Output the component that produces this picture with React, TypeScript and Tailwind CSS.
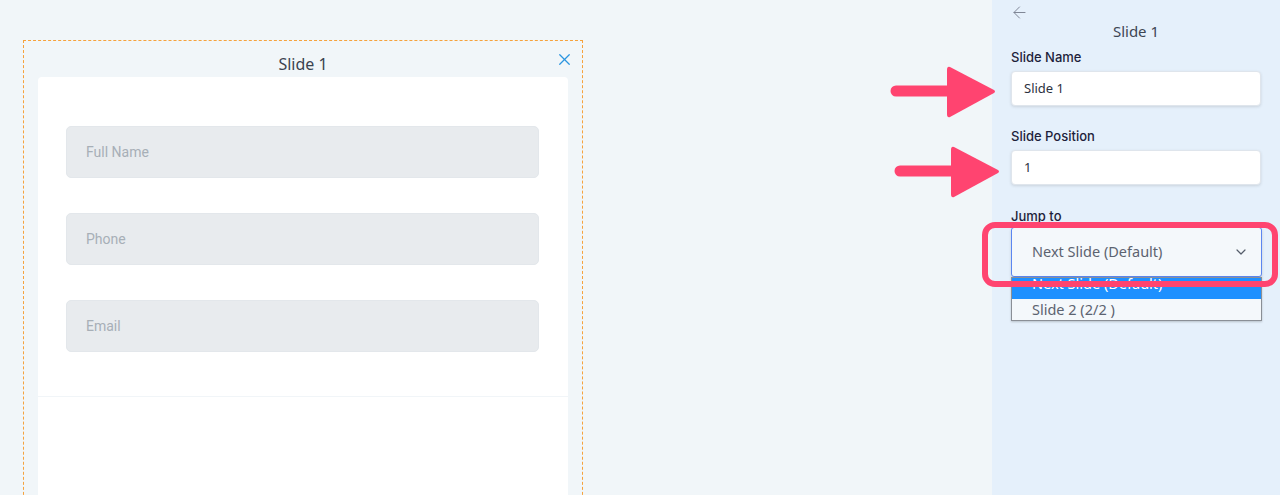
import { X, ArrowLeft, ChevronDown } from 'lucide-react'

function PinkArrow({ className }: { className: string }) {
  return (
    <svg className={`absolute ${className}`} width="110" height="56" viewBox="0 0 110 56" fill="none">
      <path d="M6 27 L62 27" stroke="#ff4470" strokeWidth="11" strokeLinecap="round" />
      <path d="M60 3 L104 26 Q106 27.5 104 29 L60 53 Q57 54 57 50 L57 6 Q57 2 60 3 Z" fill="#ff4470" />
    </svg>
  )
}

const fields = ['Full Name', 'Phone', 'Email']

export default function App() {
  return (
    <div className="relative flex h-[495px] w-[1280px] overflow-hidden bg-[#f1f6f9] font-['Noto_Sans',sans-serif]">
      {/* canvas */}
      <div className="w-[992px] shrink-0 pl-[23px] pt-[40px]">
        <div className="h-[480px] w-[560px] border border-dashed border-[#f6a23c] px-[14px]">
          <div className="relative flex h-[36px] items-end justify-center pb-[3px]">
            <span className="text-[16px] leading-[20px] text-[#3a4350]">Slide 1</span>
            <X className="absolute right-[-6px] top-[9px] text-[#2b95e0]" size={19} strokeWidth={1.6} />
          </div>
          <div className="h-[440px] w-[530px] rounded-t-[4px] bg-white">
            <div className="flex flex-col gap-[35px] px-[28px] pt-[49px] pb-[44px]">
              {fields.map((f) => (
                <div
                  key={f}
                  className="flex h-[52px] w-[473px] items-center rounded-[5px] border border-[#e3e7eb] bg-[#e8ebee] pl-[19px] font-['Roboto',sans-serif] text-[14px] text-[#a7afb7]"
                >
                  {f}
                </div>
              ))}
            </div>
            <div className="h-px bg-[#f1f5f8]" />
          </div>
        </div>
      </div>

      {/* sidebar */}
      <div className="w-[288px] shrink-0 bg-[#e5f0fb] px-[19px]">
        <div className="pt-[3px]">
          <ArrowLeft className="-ml-[1px] block text-[#7a8190]" size={19} strokeWidth={1.2} />
        </div>
        <div className="-mt-[1px] text-center text-[15px] leading-[20px] text-[#3d4654]">Slide 1</div>
        <div className="mt-[8px] font-['Inter',sans-serif] text-[13px] font-medium leading-[16px] text-[#1e1f3b]">Slide Name</div>
        <div className="mt-[6px] flex h-[35px] w-[250px] items-center rounded-[4px] border border-[#dfe5ec] bg-white pl-[12px] text-[13px] text-[#2c3140] shadow-[0_1px_3px_rgba(0,0,0,0.12)]">
          Slide 1
        </div>
        <div className="mt-[22px] font-['Inter',sans-serif] text-[13px] font-medium leading-[16px] text-[#1e1f3b]">Slide Position</div>
        <div className="mt-[6px] flex h-[35px] w-[250px] items-center rounded-[4px] border border-[#dfe5ec] bg-white pl-[12px] text-[13px] text-[#2c3140] shadow-[0_1px_3px_rgba(0,0,0,0.12)]">
          1
        </div>
        <div className="mt-[23px] font-['Inter',sans-serif] text-[13px] font-medium leading-[16px] text-[#1e1f3b]">Jump to</div>
        <div className="mt-[3px] flex h-[50px] w-[251px] items-center justify-between rounded-[3px] border border-[#5b86f0] bg-[#f4f8fb] pl-[20px] pr-[12px] text-[14.5px] text-[#5c6370] shadow-[0_2px_3px_rgba(0,0,0,0.15)]">
          <span>Next Slide (Default)</span>
          <ChevronDown className="text-[#555d6a]" size={16} strokeWidth={1.8} />
        </div>
        <div className="w-[251px] overflow-hidden border border-[#8a8f96] bg-[#f4f8fb] text-[14.5px] leading-[20px] shadow-[0_1px_2px_rgba(0,0,0,0.2)]">
          <div className="h-[21px] overflow-hidden bg-[#1e90ff] pl-[20px] text-white">
            <div className="-mt-[5px]">Next Slide (Default)</div>
          </div>
          <div className="h-[21px] pl-[20px] text-[#5c6370]">Slide 2 (2/2 )</div>
        </div>
      </div>

      {/* annotations */}
      <PinkArrow className="left-[890px] top-[64px]" />
      <PinkArrow className="left-[894px] top-[144px]" />
      <div className="absolute left-[982px] top-[222px] h-[65px] w-[296px] rounded-[13px] border-[6px] border-[#ff4470]" />
    </div>
  )
}
